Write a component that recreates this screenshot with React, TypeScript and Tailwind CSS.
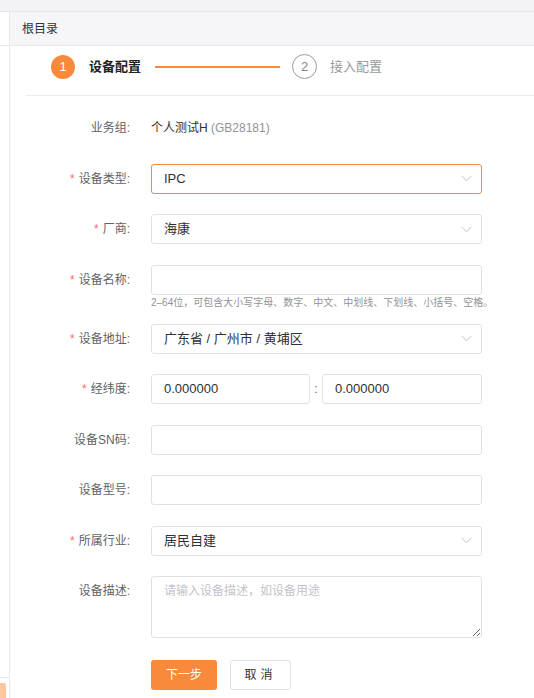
import React from 'react'

const font = { fontFamily: '"Liberation Sans", "Noto Sans CJK SC", sans-serif' }

function Arrow() {
  return (
    <svg width="11" height="7" viewBox="0 0 11 7" className="shrink-0">
      <polyline points="0.5,0.8 5.5,5.8 10.5,0.8" fill="none" stroke="#c0c4cc" strokeWidth="1" />
    </svg>
  )
}

function Label({ text, required }: { text: string; required?: boolean }) {
  return (
    <div className="w-[125px] shrink-0 pr-[21px] text-right text-[12px] leading-[30px] text-[#606266]">
      {required && <span className="mr-[4px] text-[#f56c6c]">*</span>}
      {text}
    </div>
  )
}

function Row({
  label,
  required,
  children,
  className = 'mb-[20.5px]',
}: {
  label: string
  required?: boolean
  children: React.ReactNode
  className?: string
}) {
  return (
    <div className={`flex items-start ${className}`}>
      <Label text={label} required={required} />
      <div className="w-[331px]">{children}</div>
    </div>
  )
}

function Select({ value, focused }: { value: string; focused?: boolean }) {
  return (
    <div
      className={`flex h-[30px] items-center justify-between rounded-[3px] border bg-white pl-[12px] pr-[9px] text-[13px] text-[#303133] ${
        focused ? 'border-[#f98a3c]' : 'border-[#dfe1e6]'
      }`}
    >
      <span>{value}</span>
      <Arrow />
    </div>
  )
}

function Input({ value, className = '' }: { value?: string; className?: string }) {
  return (
    <div
      className={`flex h-[30px] items-center rounded-[3px] border border-[#dfe1e6] bg-white pl-[12px] text-[13px] text-[#303133] ${className}`}
    >
      {value}
    </div>
  )
}

export default function App() {
  return (
    <div className="flex h-[698px] w-[534px] flex-col overflow-hidden bg-white" style={font}>
      {/* top strip */}
      <div className="h-[12px] shrink-0 border-b border-[#e6e6ea] bg-[#f3f3f5]" />

      <div className="flex min-h-0 flex-1">
        {/* left sidebar sliver */}
        <div className="flex w-[10px] shrink-0 flex-col border-r border-[#e8e8ec]">
          <div className="h-[34px] border-b border-[#e8e8ec]" />
          <div className="flex-1" />
          <div className="h-[6px] border-b border-[#e8e8ec]" />
          <div className="mt-[5px] h-[15px] w-[6px] rounded-tr-[2px] bg-[#ffc6a0]" />
        </div>

        <div className="flex min-w-0 flex-1 flex-col">
          {/* header */}
          <div className="flex h-[34px] shrink-0 items-center border-b border-[#ebebee] bg-[#f6f6f8] px-[12px] text-[12px] text-[#333]">
            根目录
          </div>

          <div className="ml-[16px] flex flex-col">
            {/* steps */}
            <div className="flex items-center border-b border-[#ebebee] pb-[16px] pl-[25px] pt-[8px]">
              <div className="flex h-[24px] w-[24px] items-center justify-center rounded-full bg-[#f98a3c] text-[13px] text-white">
                1
              </div>
              <span className="ml-[14px] text-[13px] font-bold text-[#222]">设备配置</span>
              <div className="ml-[14px] h-[2px] w-[125px] bg-[#f98a3c]" />
              <div className="ml-[12px] flex h-[25px] w-[25px] items-center justify-center rounded-full border-[1.5px] border-[#9a9a9a] text-[13px] text-[#888]">
                2
              </div>
              <span className="ml-[13px] text-[13px] text-[#999]">接入配置</span>
            </div>

            {/* form */}
            <div className="flex flex-col pt-[17px]">
              <Row label="业务组:">
                <div className="text-[12px] leading-[30px] text-[#303133]">
                  个人测试H <span className="text-[#909399]">(GB28181)</span>
                </div>
              </Row>

              <Row label="设备类型:" required>
                <Select value="IPC" focused />
              </Row>

              <Row label="厂商:" required>
                <Select value="海康" />
              </Row>

              <Row label="设备名称:" required className="mb-[15px]">
                <Input />
                <div className="mt-[2px] whitespace-nowrap text-[10px] leading-[12px] text-[#909399]">
                  2–64位，可包含大小写字母、数字、中文、中划线、下划线、小括号、空格。
                </div>
              </Row>

              <Row label="设备地址:" required>
                <Select value="广东省 / 广州市 / 黄埔区" />
              </Row>

              <Row label="经纬度:" required>
                <div className="flex items-center">
                  <Input value="0.000000" className="w-[159px]" />
                  <span className="w-[12px] text-center text-[12px] text-[#606266]">:</span>
                  <Input value="0.000000" className="flex-1" />
                </div>
              </Row>

              <Row label="设备SN码:">
                <Input />
              </Row>

              <Row label="设备型号:">
                <Input />
              </Row>

              <Row label="所属行业:" required>
                <Select value="居民自建" />
              </Row>

              <Row label="设备描述:" className="mb-[22px]">
                <textarea
                  placeholder="请输入设备描述，如设备用途"
                  className="block h-[62px] w-full rounded-[3px] border border-[#dfe1e6] px-[12px] py-[4px] text-[12px] leading-[20px] text-[#303133] outline-none placeholder:text-[#c0c4cc]"
                  style={font}
                />
              </Row>

              <div className="flex pl-[125px]">
                <button className="h-[30px] w-[66px] rounded-[3px] bg-[#f98a3c] text-[12px] text-white">
                  下一步
                </button>
                <button className="ml-[13px] h-[30px] w-[61px] rounded-[3px] border border-[#dfe1e6] bg-white text-[12px] tracking-[4px] text-[#303133]">
                  取消
                </button>
              </div>
            </div>
          </div>
        </div>
      </div>
    </div>
  )
}
